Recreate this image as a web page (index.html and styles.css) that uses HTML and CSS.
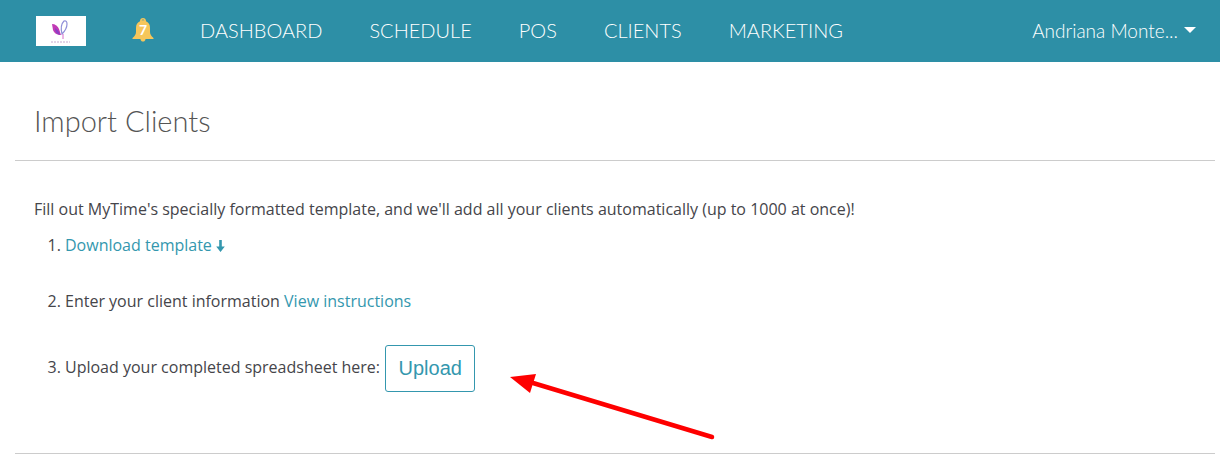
FILE: index.html
```html
<!DOCTYPE html>
<html lang="en">

<head>
    <meta charset="UTF-8">
    <meta name="viewport" content="width=device-width, initial-scale=1.0">
    <title>Import Clients</title>
    <link rel="stylesheet" href="styles.css">
</head>

<body>
    <header class="topbar">
        <div class="logo">
            <svg width="50" height="30" viewBox="0 0 50 30">
                <path d="M16 8c3 0 6 2 7 5l2 6c-4 0-7-2-8-5z" fill="#c23bb5" />
                <path d="M19 12c2 1 4 3 5 7-3-1-5-3-5-7z" fill="#8a3fc4" />
                <path d="M28 5c2-.5 3 .5 3 3s-2 7-5 10c-1-4-1-10 2-13z" fill="none" stroke="#8f8fd8" stroke-width="1.2" />
                <path d="M27 18v5" stroke="#d86ac8" stroke-width="1" />
                <path d="M15 26h19" stroke="#c9a9d0" stroke-width="1.2" stroke-dasharray="2 1" />
            </svg>
        </div>
        <div class="bell">
            <svg width="22" height="24" viewBox="0 0 22 24">
                <path d="M11 0c-1.700 0-3 1.200-3 2.700v.6C5 4.500 4 7 4 10v4c0 2.500-1.500 4.200-3.500 6v1h8c0 1.500 1 2.600 2.500 2.600s2.500-1.100 2.500-2.600h8v-1c-2-1.800-3.500-3.500-3.500-6v-4c0-3-1-5.500-4-6.700v-.6C14 1.200 12.700 0 11 0zm0 1.500c.6 0 1.100.4 1.300 1-.8-.2-1.800-.2-2.600 0 .2-.6.700-1 1.300-1z" fill="#f6c65b" />
            </svg>
            <span class="bell-count">7</span>
        </div>
        <nav class="nav">
            <a href="#">DASHBOARD</a>
            <a href="#">SCHEDULE</a>
            <a href="#">POS</a>
            <a href="#">CLIENTS</a>
            <a href="#">MARKETING</a>
        </nav>
        <div class="user">
            <span>Andriana Monte...</span>
            <span class="caret"></span>
        </div>
    </header>

    <main class="content">
        <h1 class="title">Import Clients</h1>
        <section class="panel">
            <p class="intro">Fill out MyTime's specially formatted template, and we'll add all your clients automatically (up to 1000 at once)!</p>
            <ol class="steps">
                <li class="step-one"><a href="#">Download template <svg class="down" width="9" height="12" viewBox="0 0 9 12"><path d="M3.200 0h2.600v6.500h3L4.500 12 .2 6.500h3z" fill="#3497ae" /></svg></a></li>
                <li class="step-two">Enter your client information <a href="#">View instructions</a></li>
                <li class="step-three">Upload your completed spreadsheet here: <button class="upload" type="button">Upload</button></li>
            </ol>
        </section>
    </main>

    <svg class="arrow" width="210" height="70" viewBox="0 0 210 70">
        <path d="M23 13L202 67" stroke="#fe0000" stroke-width="4.500" stroke-linecap="round" />
        <path d="M0 7L26 4 20 23z" fill="#fe0000" />
    </svg>
</body>

</html>
```

FILE: styles.css
```css
body {
    margin: 0;
    font-family: "Open Sans", sans-serif;
    font-size: 16px;
    color: #45454a;
    background-color: white;
}

a {
    color: #3497ae;
    text-decoration: none;
}

.topbar {
    display: flex;
    align-items: center;
    height: 62px;
    padding: 0 24px 0 36px;
    background-color: #2d8fa6;
    font-family: "Lato", sans-serif;
}

.logo {
    width: 50px;
    height: 30px;
    background-color: white;
}

.logo svg {
    display: block;
}

.bell {
    position: relative;
    width: 22px;
    height: 24px;
    margin-left: 46px;
    margin-top: -3px;
}

.bell-count {
    position: absolute;
    top: 4px;
    left: 0;
    width: 100%;
    text-align: center;
    font-size: 14px;
    font-weight: 700;
    line-height: 16px;
    color: white;
}

.nav {
    display: flex;
    gap: 47px;
    margin-left: 46px;
    margin-top: -2px;
}

.nav a {
    font-size: 20px;
    font-weight: 300;
    color: white;
}

.user {
    display: flex;
    align-items: center;
    gap: 6px;
    margin-left: auto;
    margin-top: -2px;
    font-size: 19px;
    font-weight: 300;
    color: white;
}

.caret {
    width: 0;
    height: 0;
    border-left: 6px solid transparent;
    border-right: 6px solid transparent;
    border-top: 6px solid white;
}

.content {
    margin: 0 5px 0 15px;
}

.title {
    margin: 0;
    padding: 41px 19px 21px;
    font-family: "Lato", sans-serif;
    font-size: 29px;
    font-weight: 300;
    line-height: 36px;
    color: #555;
    border-bottom: 1px solid #ccc;
}

.panel {
    height: 293px;
    padding: 0 19px;
    box-sizing: border-box;
    border-bottom: 1px solid #ccc;
}

.intro {
    margin: 0;
    padding-top: 38px;
    line-height: 20px;
}

.steps {
    margin: 0;
    padding-left: 31px;
}

.steps li {
    line-height: 20px;
}

.step-one {
    margin-top: 16px;
}

.step-two {
    margin-top: 36px;
}

.step-three {
    margin-top: 34px;
}

.down {
    vertical-align: -1px;
}

.upload {
    width: 90px;
    height: 47px;
    margin-left: 1px;
    padding: 0;
    font-family: "Liberation Sans", sans-serif;
    font-size: 20px;
    color: #3497ae;
    background-color: white;
    border: 1px solid #3497ae;
    border-radius: 3px;
    vertical-align: middle;
}

.arrow {
    position: absolute;
    left: 510px;
    top: 370px;
}
```
